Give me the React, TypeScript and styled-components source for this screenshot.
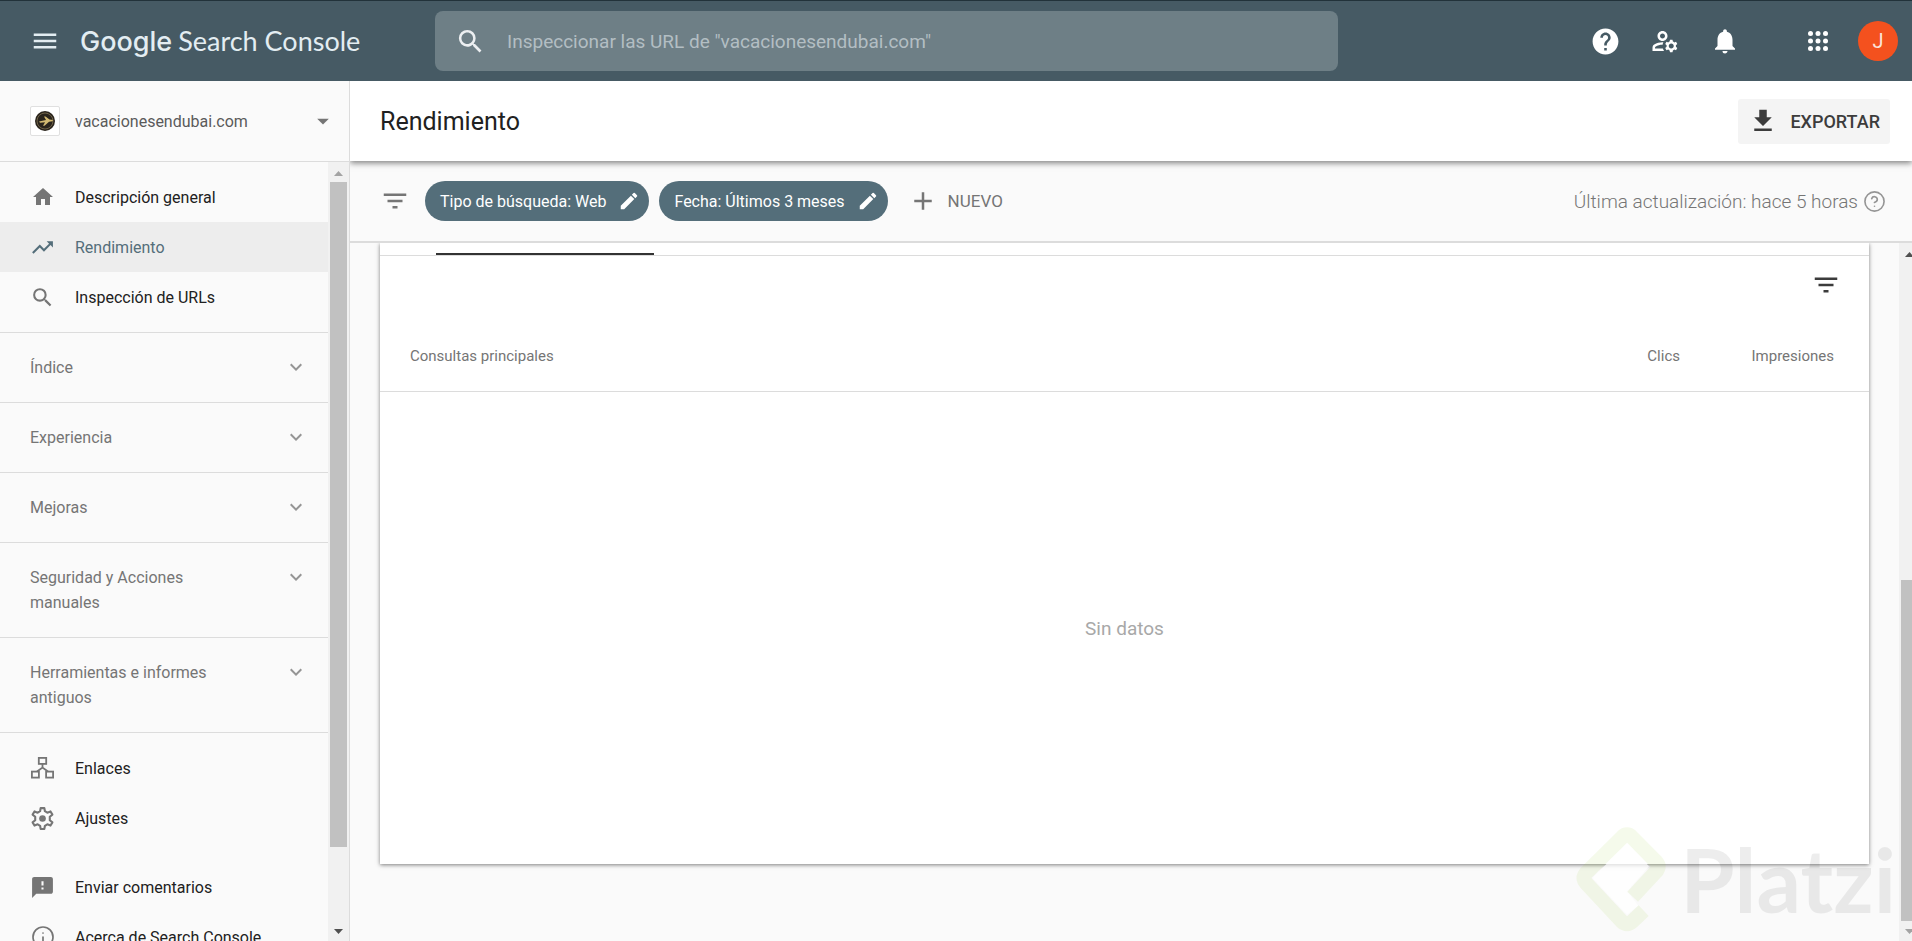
import React from 'react';
import styled, { createGlobalStyle } from 'styled-components';
import { CircleHelp, Info } from 'lucide-react';
import {
  MdAdd,
  MdArrowDropDown,
  MdEdit,
  MdExpandMore,
  MdFeedback,
  MdFilterList,
  MdGetApp,
  MdHelp,
  MdHome,
  MdMenu,
  MdNotifications,
  MdOutlineManageAccounts,
  MdSearch,
  MdTrendingUp,
} from 'react-icons/md';

const color = {
  header: '#465a64',
  accent: '#546e7a',
  surface: '#fafafa',
  line: '#dcdcdc',
  text: '#212121',
  muted: '#757575',
  faint: '#959595',
  track: '#f1f1f1',
  thumb: '#c1c1c1',
};

const GlobalStyle = createGlobalStyle`
  *, *::before, *::after { box-sizing: border-box; }
  body {
    margin: 0;
    font-family: Roboto, "Liberation Sans", sans-serif;
    font-size: 16px;
    color: ${color.text};
    background: ${color.surface};
  }
  button, input, select { font: inherit; color: inherit; border: 0; background: none; padding: 0; margin: 0; }
  button { cursor: pointer; }
  a { color: inherit; text-decoration: none; }
  svg { display: block; flex: none; }
`;

const Page = styled.div`
  display: flex;
  flex-direction: column;
  height: 100vh;
  overflow: hidden;
`;

/* ---------- Header ---------- */

const Header = styled.header`
  display: flex;
  align-items: center;
  flex: none;
  height: 81px;
  padding-right: 14px;
  border-top: 1px solid #22323a;
  background: ${color.header};
  color: #fff;
`;

const Brand = styled.div`
  display: flex;
  align-items: center;
  flex: none;
  width: 435px;
  padding-left: 30px;
  gap: 20px;
  color: #e3edf2;
`;

const Wordmark = styled.a`
  display: flex;
  align-items: baseline;
  gap: 6px;
  font-family: Lato, "Liberation Sans", sans-serif;
  font-size: 27px;
  line-height: 36px;
`;

const WordmarkStrong = styled.span`
  font-family: Inter, "Liberation Sans", sans-serif;
  font-weight: 500;
`;

const IconButton = styled.button<{ $width?: number }>`
  display: flex;
  align-items: center;
  justify-content: center;
  width: ${({ $width = 30 }) => $width}px;
  height: 40px;
`;

const SearchBox = styled.label`
  display: flex;
  align-items: center;
  flex: 1;
  max-width: 903px;
  height: 60px;
  padding: 0 20px;
  gap: 21px;
  border-radius: 8px;
  background: #6e7f86;
  color: #eceff1;
`;

const SearchInput = styled.input`
  flex: 1;
  min-width: 0;
  height: 40px;
  font-size: 19px;
  outline: 0;
  &::placeholder { color: #b3bec3; opacity: 1; }
`;

const Tools = styled.div`
  display: flex;
  align-items: center;
  flex: none;
  margin-left: auto;
`;

const ToolsSpacer = styled.div`
  width: 43px;
`;

const Avatar = styled.button`
  width: 40px;
  height: 40px;
  margin-left: 20px;
  border-radius: 50%;
  background: #f4511e;
  color: #fbe3da;
  font-size: 20px;
  line-height: 40px;
`;

/* ---------- Sidebar ---------- */

const Body = styled.div`
  display: flex;
  flex: 1;
  min-height: 0;
`;

const Sidebar = styled.aside`
  display: flex;
  flex-direction: column;
  flex: none;
  width: 350px;
  border-right: 1px solid ${color.line};
  background: ${color.surface};
`;

const Property = styled.div`
  display: flex;
  align-items: center;
  flex: none;
  height: 81px;
  padding: 0 12px 0 30px;
  gap: 15px;
  border-bottom: 1px solid ${color.line};
  color: ${color.muted};
`;

const Favicon = styled.span`
  display: flex;
  align-items: center;
  justify-content: center;
  width: 30px;
  height: 30px;
  border: 1px solid #e0e0e0;
  border-radius: 2px;
  background: #fff;
`;

const PropertySelect = styled.select`
  flex: 1;
  min-width: 0;
  height: 40px;
  appearance: none;
  color: #5a5a5a;
`;

const SidebarScroll = styled.div`
  display: flex;
  flex: 1;
  min-height: 0;
`;

const Nav = styled.nav`
  flex: 1;
  overflow: hidden;
`;

const NavGroup = styled.div<{ $top?: number }>`
  padding-top: ${({ $top = 10 }) => $top}px;
  &:first-child { padding-bottom: 10px; }
`;

const NavItem = styled.a<{ $active?: boolean }>`
  display: flex;
  align-items: center;
  height: 50px;
  padding-left: 30px;
  gap: 20px;
  color: ${({ $active }) => ($active ? color.accent : color.text)};
  background: ${({ $active }) => ($active ? '#ededed' : 'transparent')};
  svg { color: ${({ $active }) => ($active ? color.accent : color.muted)}; }
`;

const NavIcon = styled.span`
  display: flex;
  justify-content: center;
  width: 25px;
`;

const Section = styled.button`
  display: flex;
  align-items: flex-start;
  justify-content: space-between;
  width: 100%;
  padding: 22px 20px 22px 30px;
  border-top: 1px solid ${color.line};
  line-height: 25px;
  text-align: left;
  color: ${color.muted};
  svg { color: ${color.faint}; }
  &:last-of-type { border-bottom: 1px solid ${color.line}; }
`;

const SectionName = styled.span`
  width: 200px;
`;

/* ---------- Scrollbars ---------- */

const Track = styled.div<{ $width: number }>`
  display: flex;
  flex-direction: column;
  flex: none;
  width: ${({ $width }) => $width}px;
  padding: 0 2px;
  overflow: hidden;
  background: ${color.track};
`;

const TrackArrow = styled.svg`
  width: 17px;
  height: 20px;
`;

const TrackPart = styled.div<{ $grow: number; $thumb?: boolean }>`
  flex: ${({ $grow }) => $grow} 0 0;
  width: 17px;
  background: ${({ $thumb }) => ($thumb ? color.thumb : 'transparent')};
`;

/* ---------- Main ---------- */

const Main = styled.main`
  position: relative;
  display: flex;
  flex-direction: column;
  flex: 1;
  min-width: 0;
  overflow: hidden;
`;

const TitleBar = styled.div`
  display: flex;
  align-items: center;
  justify-content: space-between;
  flex: none;
  height: 80px;
  padding: 0 22px 0 30px;
  background: #fff;
  box-shadow: 0 2px 6px rgba(0, 0, 0, 0.5);
  z-index: 1;
`;

const Title = styled.h1`
  margin: 0;
  font-size: 25px;
  font-weight: 400;
`;

const ExportButton = styled.button`
  display: flex;
  align-items: center;
  height: 45px;
  padding: 0 10px;
  gap: 12px;
  border-radius: 3px;
  background: #f4f4f4;
  font-size: 18px;
  font-weight: 500;
  color: #3c3c3c;
`;

const FilterBar = styled.div`
  display: flex;
  align-items: center;
  flex: none;
  height: 82px;
  padding: 0 26px 0 30px;
  border-bottom: 2px solid ${color.line};
  color: ${color.muted};
`;

const Chips = styled.div`
  display: flex;
  gap: 10px;
  margin: 0 20px 0 15px;
`;

const Chip = styled.button`
  display: flex;
  align-items: center;
  height: 40px;
  padding: 0 9px 0 15px;
  gap: 12px;
  border-radius: 20px;
  background: ${color.accent};
  color: #fff;
`;

const NewButton = styled.button`
  display: flex;
  align-items: center;
  gap: 10px;
  height: 40px;
  font-size: 17px;
`;

const Updated = styled.div`
  display: flex;
  align-items: center;
  gap: 5px;
  margin-left: auto;
  font-size: 19px;
  font-weight: 300;
  svg { color: ${color.faint}; }
`;

const Scroller = styled.div`
  display: flex;
  flex: 1;
  min-height: 0;
`;

const Content = styled.div`
  flex: 1;
  display: flex;
  padding: 0 30px 77px;
  overflow: hidden;
`;

const Card = styled.section`
  display: flex;
  flex-direction: column;
  flex: 1;
  background: #fff;
  box-shadow: 0 1px 4px rgba(0, 0, 0, 0.5);
`;

const TabStrip = styled.div`
  display: flex;
  align-items: flex-end;
  flex: none;
  height: 13px;
  padding-left: 56px;
  border-bottom: 1px solid ${color.line};
`;

const TabIndicator = styled.div`
  width: 218px;
  height: 2px;
  background: #333;
`;

const CardTools = styled.div`
  display: flex;
  justify-content: flex-end;
  flex: none;
  padding: 9px 28px 15px;
  color: #3c3c3c;
`;

const Table = styled.table`
  flex: 1;
  display: flex;
  flex-direction: column;
  font-size: 15px;
  color: ${color.muted};
`;

const HeadRow = styled.tr`
  display: flex;
  align-items: center;
  height: 72px;
  padding: 0 35px 0 30px;
  border-bottom: 1px solid ${color.line};
`;

const HeadCell = styled.th<{ $width?: number }>`
  flex: ${({ $width }) => ($width ? `0 0 ${$width}px` : '1')};
  padding: 0;
  font-weight: 400;
  text-align: ${({ $width }) => ($width ? 'right' : 'left')};
`;

const TableBody = styled.tbody`
  display: flex;
  flex: 1;
`;

const EmptyRow = styled.tr`
  display: flex;
  flex: 1;
`;

const EmptyCell = styled.td`
  display: flex;
  flex: 1;
  align-items: center;
  justify-content: center;
  font-size: 19px;
  color: #a8a8a8;
`;

/* The watermark floats over the card and the page margin. */
const Watermark = styled.div`
  position: absolute;
  right: 16px;
  bottom: 8px;
  display: flex;
  align-items: center;
  gap: 14px;
  font-family: Lato, "Liberation Sans", sans-serif;
  font-size: 88px;
  line-height: 108px;
  font-weight: 700;
  color: rgba(0, 0, 0, 0.07);
  pointer-events: none;
`;

/* ---------- Drawings ---------- */

const AppsIcon = () => (
  <svg width="20" height="20" viewBox="0 0 20 20" fill="currentColor" aria-hidden>
    {[2.5, 10, 17.5].map((y) =>
      [2.5, 10, 17.5].map((x) => <circle key={`${x}-${y}`} cx={x} cy={y} r="2.5" />),
    )}
  </svg>
);

const LinksIcon = () => (
  <svg width="23" height="22" viewBox="0 0 23 22" fill="none" stroke="currentColor" strokeWidth="1.8" aria-hidden>
    <rect x="7.8" y="0.9" width="7.4" height="6" />
    <rect x="0.9" y="14.6" width="7" height="6" />
    <rect x="15.1" y="14.6" width="7" height="6" />
    <path d="M11.5 7v4.5M6 14.5l5.5-4 5.5 4" />
  </svg>
);

const GearIcon = () => (
  <svg width="25" height="25" viewBox="0 0 24 24" fill="none" stroke="currentColor" strokeWidth="2" aria-hidden>
    <path
      d="M10.2 2h3.600l.5 3 2.300 1.400 3.100-1.200 1.800 3.100-2.500 2v3.400l2.500 2-1.800 3.100-3.100-1.200-2.300 1.400-.5 3h-3.600L9.700 19l-2.300-1.400-3.100 1.200-1.800-3.100 2.500-2v-3.400l-2.500-2 1.800-3.100 3.100 1.200L9.700 5z"
      strokeLinejoin="round"
    />
    <circle cx="12" cy="12" r="3.200" fill="currentColor" stroke="none" />
  </svg>
);

const SiteIcon = () => (
  <svg width="20" height="20" viewBox="0 0 20 20" aria-hidden>
    <circle cx="10" cy="10" r="10" fill="#2a241c" />
    <circle cx="10" cy="10" r="8" fill="none" stroke="#6e6248" strokeWidth="1" />
    <path d="M4 10.500l7-1.500-2-3.500h1.500l4 3 3.500.5-.5 1.200-3.500.6-4.500 4H8l2-3.600-5 .5z" fill="#d3ba72" />
  </svg>
);

const PlatziMark = () => (
  <svg width="91" height="108" viewBox="98 131 273 324" aria-hidden>
    <path d="M254 187L150 290L254 400L288 373L255 330L320 255Z" fill="#fff" fillOpacity="0.7" />
    <path
      d="M271 346L342 270Q354 255 342 242L270 169Q254 151 238 169L131 275Q119 290 131 305L238 420Q254 435 270 420L304 388"
      fill="none"
      stroke="#9aca3c"
      strokeOpacity="0.1"
      strokeWidth="44"
      strokeLinejoin="round"
    />
  </svg>
);

type ArrowProps = { down?: boolean; tint?: string };
const ScrollArrow = ({ down, tint = '#505050' }: ArrowProps) => (
  <TrackArrow viewBox="0 0 17 20" aria-hidden>
    <path d={down ? 'M4 8h9l-4.500 5z' : 'M4 14h9l-4.500-5z'} fill={tint} />
  </TrackArrow>
);

const primaryNav = [
  { label: 'Descripción general', icon: <MdHome size={24} /> },
  { label: 'Rendimiento', icon: <MdTrendingUp size={25} />, active: true },
  { label: 'Inspección de URLs', icon: <MdSearch size={25} /> },
];

const sections = [
  'Índice',
  'Experiencia',
  'Mejoras',
  'Seguridad y Acciones manuales',
  'Herramientas e informes antiguos',
];

const toolsNav = [
  { label: 'Enlaces', icon: <LinksIcon /> },
  { label: 'Ajustes', icon: <GearIcon /> },
];

const footerNav = [
  { label: 'Enviar comentarios', icon: <MdFeedback size={25} /> },
  { label: 'Acerca de Search Console', icon: <Info size={24} strokeWidth={1.7} /> },
];

type NavEntry = { label: string; icon: React.ReactNode; active?: boolean };

const NavList = ({ items, top }: { items: NavEntry[]; top?: number }) => (
  <NavGroup $top={top}>
    {items.map(({ label, icon, active }) => (
      <NavItem key={label} href="#" $active={active} aria-current={active ? 'page' : undefined}>
        <NavIcon>{icon}</NavIcon>
        {label}
      </NavItem>
    ))}
  </NavGroup>
);

export default function App() {
  return (
    <Page>
      <GlobalStyle />
      <Header>
        <Brand>
          <IconButton aria-label="Menú">
            <MdMenu size={30} />
          </IconButton>
          <Wordmark href="#">
            <WordmarkStrong>Google</WordmarkStrong>
            <span>Search Console</span>
          </Wordmark>
        </Brand>
        <SearchBox>
          <MdSearch size={31} aria-hidden />
          <SearchInput
            aria-label="Inspeccionar URL"
            placeholder={'Inspeccionar las URL de "vacacionesendubai.com"'}
          />
        </SearchBox>
        <Tools>
          <IconButton $width={60} aria-label="Ayuda">
            <MdHelp size={31} />
          </IconButton>
          <IconButton $width={60} aria-label="Usuarios y permisos">
            <MdOutlineManageAccounts size={30} />
          </IconButton>
          <IconButton $width={60} aria-label="Notificaciones">
            <MdNotifications size={30} />
          </IconButton>
          <ToolsSpacer />
          <IconButton $width={40} aria-label="Aplicaciones">
            <AppsIcon />
          </IconButton>
          <Avatar>J</Avatar>
        </Tools>
      </Header>

      <Body>
        <Sidebar>
          <Property>
            <Favicon>
              <SiteIcon />
            </Favicon>
            <PropertySelect aria-label="Propiedad">
              <option>vacacionesendubai.com</option>
            </PropertySelect>
            <MdArrowDropDown size={28} aria-hidden />
          </Property>
          <SidebarScroll>
            <Nav>
              <NavList items={primaryNav} />
              {sections.map((name) => (
                <Section key={name} aria-expanded={false}>
                  <SectionName>{name}</SectionName>
                  <MdExpandMore size={24} />
                </Section>
              ))}
              <NavList items={toolsNav} />
              <NavList items={footerNav} top={19} />
            </Nav>
            <Track $width={21}>
              <ScrollArrow tint="#a3a3a3" />
              <TrackPart $grow={665} $thumb />
              <TrackPart $grow={74} />
              <ScrollArrow down />
            </Track>
          </SidebarScroll>
        </Sidebar>

        <Main>
          <TitleBar>
            <Title>Rendimiento</Title>
            <ExportButton>
              <MdGetApp size={30} />
              EXPORTAR
            </ExportButton>
          </TitleBar>
          <FilterBar>
            <MdFilterList size={30} />
            <Chips>
              <Chip>
                Tipo de búsqueda: Web
                <MdEdit size={22} />
              </Chip>
              <Chip>
                Fecha: Últimos 3 meses
                <MdEdit size={22} />
              </Chip>
            </Chips>
            <NewButton>
              <MdAdd size={30} />
              NUEVO
            </NewButton>
            <Updated>
              Última actualización: hace 5 horas
              <CircleHelp size={23} strokeWidth={1.7} />
            </Updated>
          </FilterBar>
          <Scroller>
            <Content>
              <Card>
                <TabStrip>
                  <TabIndicator />
                </TabStrip>
                <CardTools>
                  <IconButton aria-label="Filtrar filas">
                    <MdFilterList size={30} />
                  </IconButton>
                </CardTools>
                <Table>
                  <thead>
                    <HeadRow>
                      <HeadCell scope="col">Consultas principales</HeadCell>
                      <HeadCell scope="col" $width={90}>Clics</HeadCell>
                      <HeadCell scope="col" $width={154}>Impresiones</HeadCell>
                    </HeadRow>
                  </thead>
                  <TableBody>
                    <EmptyRow>
                      <EmptyCell>Sin datos</EmptyCell>
                    </EmptyRow>
                  </TableBody>
                </Table>
              </Card>
            </Content>
            <Track $width={13}>
              <ScrollArrow />
              <TrackPart $grow={317} />
              <TrackPart $grow={341} $thumb />
              <ScrollArrow down tint="#a3a3a3" />
            </Track>
          </Scroller>
          <Watermark>
            <PlatziMark />
            <span>Platzi</span>
          </Watermark>
        </Main>
      </Body>
    </Page>
  );
}
